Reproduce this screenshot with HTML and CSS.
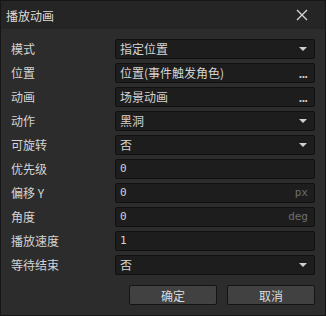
FILE: index.html
```html
<!DOCTYPE html>
<html lang="zh-CN">
<head>
    <meta charset="UTF-8">
    <title>播放动画</title>
    <link rel="stylesheet" href="styles.css">
</head>
<body>
    <div class="dialog">
        <div class="titlebar">
            <span class="title">播放动画</span>
            <span class="close">
                <svg width="12" height="12" viewBox="0 0 12 12"><path d="M1 1L11 11M11 1L1 11" stroke="#d8d8d8" stroke-width="1.3" fill="none"/></svg>
            </span>
        </div>
        <div class="content">
            <div class="form">
                <label>模式</label>
                <div class="field select"><span>指定位置</span><i class="arrow"></i></div>
                <label>位置</label>
                <div class="field picker"><span>位置(事件触发角色)</span><i class="dots">...</i></div>
                <label>动画</label>
                <div class="field picker"><span>场景动画</span><i class="dots">...</i></div>
                <label>动作</label>
                <div class="field select"><span>黑洞</span><i class="arrow"></i></div>
                <label>可旋转</label>
                <div class="field select"><span>否</span><i class="arrow"></i></div>
                <label>优先级</label>
                <div class="field number"><span>0</span></div>
                <label>偏移 Y</label>
                <div class="field number"><span>0</span><i class="unit">px</i></div>
                <label>角度</label>
                <div class="field number"><span>0</span><i class="unit">deg</i></div>
                <label>播放速度</label>
                <div class="field number"><span>1</span></div>
                <label>等待结束</label>
                <div class="field select"><span>否</span><i class="arrow"></i></div>
            </div>
            <div class="buttons">
                <button>确定</button>
                <button>取消</button>
            </div>
        </div>
    </div>
</body>
</html>
```

FILE: styles.css
```css
* {
    margin: 0;
    padding: 0;
    box-sizing: border-box;
}
html, body {
    width: 326px;
    height: 316px;
    background: #1a1a1a;
    font-family: "Noto Sans CJK SC", "Noto Sans", sans-serif;
    font-size: 12px;
    color: #d4d4d4;
}
.dialog {
    width: 326px;
    height: 316px;
    border: 1px solid #161616;
    background: #2c2c2c;
    display: flex;
    flex-direction: column;
}
.titlebar {
    height: 28px;
    background: #252525;
    display: flex;
    align-items: center;
    justify-content: space-between;
    padding: 0 10px 0 5px;
}
.title {
    font-size: 12px;
    color: #dcdcdc;
}
.close {
    display: flex;
    width: 14px;
    justify-content: center;
    margin-right: 6px;
}
.content {
    padding: 10px 10px 0 10px;
}
.form {
    display: grid;
    grid-template-columns: 104px 1fr;
    row-gap: 4px;
    align-items: center;
}
.form label {
    line-height: 20px;
}
.field {
    height: 20px;
    background: #1d1d1e;
    border: 1px solid #101010;
    border-radius: 2px;
    display: flex;
    align-items: center;
    justify-content: space-between;
    padding: 0 6px 0 4px;
    line-height: 18px;
}
.field i {
    font-style: normal;
}
.arrow {
    width: 0;
    height: 0;
    border-left: 4px solid transparent;
    border-right: 4px solid transparent;
    border-top: 4px solid #d0d0d0;
    margin-right: 1px;
}
.dots {
    font-family: "DejaVu Sans", sans-serif;
    font-size: 10px;
    font-weight: bold;
    color: #c8c8c8;
    letter-spacing: -1px;
    line-height: 10px;
    padding-top: 4px;
    padding-right: 1px;
}
.number span {
    font-family: "DejaVu Sans Mono", monospace;
    font-size: 11px;
}
.unit {
    font-family: "DejaVu Sans Mono", monospace;
    font-size: 11px;
    color: #6e6e6e;
}
.buttons {
    display: flex;
    justify-content: flex-end;
    gap: 10px;
    margin-top: 10px;
}
.buttons button {
    width: 88px;
    height: 20px;
    background: #414141;
    border: 1px solid #141414;
    border-radius: 2px;
    color: #dcdcdc;
    font-family: "Noto Sans CJK SC", "Noto Sans", sans-serif;
    font-size: 12px;
}
```
